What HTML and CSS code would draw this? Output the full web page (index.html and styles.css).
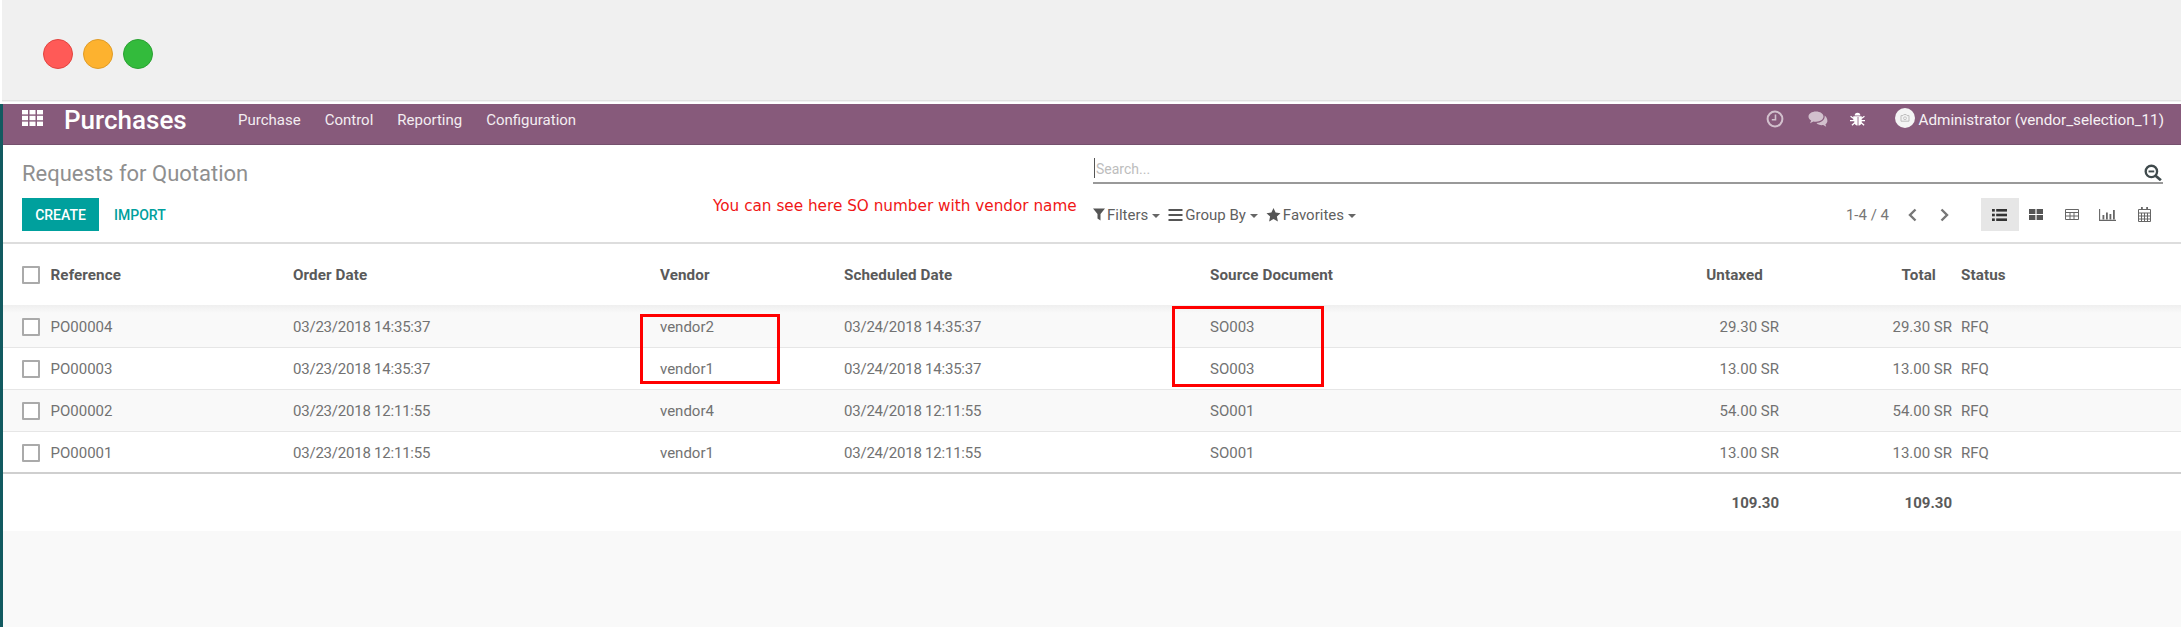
FILE: index.html
```html
<!DOCTYPE html>
<html lang="en">
<head>
<meta charset="utf-8">
<title>Requests for Quotation</title>
<link rel="stylesheet" href="styles.css">
</head>
<body>
<header class="chrome">
  <span class="light red"></span><span class="light amber"></span><span class="light green"></span>
</header>
<div class="app">
  <nav class="nav">
    <svg class="apps" viewBox="0 0 21 16" width="21" height="16"><g fill="#fff"><rect x="0" y="0" width="6" height="4.4"/><rect x="7.5" y="0" width="6" height="4.4"/><rect x="15" y="0" width="6" height="4.4"/><rect x="0" y="5.8" width="6" height="4.4"/><rect x="7.5" y="5.8" width="6" height="4.4"/><rect x="15" y="5.8" width="6" height="4.4"/><rect x="0" y="11.6" width="6" height="4.4"/><rect x="7.5" y="11.6" width="6" height="4.4"/><rect x="15" y="11.6" width="6" height="4.4"/></g></svg>
    <span class="brand">Purchases</span>
    <ul class="menu"><li>Purchase</li><li>Control</li><li>Reporting</li><li>Configuration</li></ul>
    <div class="systray">
      <svg class="tray-clock" viewBox="0 0 18 18" width="18" height="18"><circle cx="9" cy="9" r="7.4" fill="none" stroke="#d2c0cd" stroke-width="2"/><path d="M9.5 4.5V9.8H5.8" fill="none" stroke="#d2c0cd" stroke-width="1.6"/></svg>
      <svg class="tray-chat" viewBox="0 0 20 16" width="20" height="16"><path d="M8 0.5C3.8 0.5 0.5 2.8 0.5 5.6c0 1.6 1 3 2.7 4L2 12.2l3.4-1.7c.8.2 1.700.3 2.600.3 4.200 0 7.500-2.300 7.500-5.200S12.200.5 8 .5z" fill="#d2c0cd"/><path d="M16.600 4.400c.1.400.1.800.1 1.200 0 3.600-3.700 6.300-8.200 6.500 1 1.300 3 2.100 5.200 2.100.5 0 1 0 1.500-.1l3 1.700-.8-2.500c1.200-.8 2-2 2-3.300 0-2.400-1.200-4.500-2.800-5.600z" fill="#d2c0cd"/></svg>
      <svg class="tray-bug" viewBox="0 0 16 16" width="15" height="16"><g fill="#fff"><path d="M5 4.200a3 3 0 0 1 6 0z"/><path d="M3.500 5h9v1.500l2.500-2 .8 1-3.300 2.600V9H16v1.300h-3.500v1.200l3 2.700-.9 1-2.500-2.200c-.6 1.200-1.900 2-3.100 2V5.900h-.900V15c-1.200 0-2.500-.8-3.100-2l-2.500 2.200-.9-1 3-2.700v-1.200H0V9h3.500V8.100L.2 5.500l.8-1 2.500 2z"/></g></svg>
      <span class="avatar"><svg viewBox="0 0 12 10" width="10" height="8"><path d="M1 2h2.500l1-1.300h3L8.500 2H11v7H1z" fill="none" stroke="#bbb" stroke-width="1.200"/><circle cx="6" cy="5.300" r="1.800" fill="none" stroke="#bbb"/></svg></span>
      <span class="user">Administrator (vendor_selection_11)</span>
    </div>
  </nav>

  <section class="control">
    <div class="control-left">
      <h1 class="title">Requests for Quotation</h1>
      <div class="actions">
        <button class="btn-create">CREATE</button>
        <button class="btn-import">IMPORT</button>
      </div>
    </div>
    <div class="control-right">
      <div class="search">
        <span class="caret-bar"></span><span class="placeholder">Search...</span>
        <svg class="search-icon" viewBox="0 0 18 16" width="19" height="17"><circle cx="7" cy="7" r="5.400" fill="none" stroke="#3f4a4c" stroke-width="2.200"/><path d="M4.300 7h5.400" stroke="#3f4a4c" stroke-width="1.800"/><path d="M11 11l5 4.300" stroke="#3f4a4c" stroke-width="2.600"/></svg>
      </div>
      <div class="tools">
        <div class="filters">
          <span class="tool tool-filters"><svg viewBox="0 0 12 12" width="12" height="13"><path d="M0 0h12L7.500 5.500V12L4.500 10V5.500z" fill="#555"/></svg><span>Filters</span><i class="tri"></i></span>
          <span class="tool tool-group"><svg viewBox="0 0 14 12" width="15" height="12"><path d="M0 1h14M0 6h14M0 11h14" stroke="#555" stroke-width="1.800"/></svg><span>Group By</span><i class="tri"></i></span>
          <span class="tool tool-fav"><svg viewBox="0 0 14 14" width="15" height="14"><path d="M7 0l2.100 4.600 4.900.6-3.600 3.400 1 4.900L7 11.100 2.600 13.500l1-4.900L0 5.200l4.900-.6z" fill="#555"/></svg><span>Favorites</span><i class="tri"></i></span>
        </div>
        <span class="pager">1-4 / 4</span>
        <svg class="chev" viewBox="0 0 9 14" width="9" height="14"><path d="M7.500 1.500L2 7l5.500 5.500" fill="none" stroke="#777" stroke-width="2.400"/></svg>
        <svg class="chev chev-next" viewBox="0 0 9 14" width="9" height="14"><path d="M1.500 1.500L7 7l-5.500 5.500" fill="none" stroke="#777" stroke-width="2.400"/></svg>
        <div class="views">
          <span class="view active"><svg viewBox="0 0 15 12" width="15" height="12"><g fill="#333"><rect y="0" width="2.800" height="2.600"/><rect y="4.700" width="2.800" height="2.600"/><rect y="9.400" width="2.800" height="2.600"/><rect x="4.200" y="0" width="10.800" height="2.600"/><rect x="4.200" y="4.700" width="10.800" height="2.600"/><rect x="4.200" y="9.400" width="10.800" height="2.600"/></g></svg></span>
          <span class="view"><svg viewBox="0 0 14 11" width="14" height="11"><g fill="#555"><rect width="6.400" height="5"/><rect x="7.600" width="6.400" height="5"/><rect y="6" width="6.400" height="5"/><rect x="7.600" y="6" width="6.400" height="5"/></g></svg></span>
          <span class="view"><svg viewBox="0 0 14 11" width="14" height="11"><path d="M.5.500h13v10H.500zM.5 3.500h13M.5 7h13M5 3.500v7M9 3.500v7" fill="none" stroke="#666"/></svg></span>
          <span class="view"><svg viewBox="0 0 17 12" width="17" height="12"><path d="M.6 0v11.400H17" fill="none" stroke="#666" stroke-width="1.100"/><path d="M3.500 6h1.800v4.500H3.500zM7 3.500h1.800v7H7zM10.500 5h1.800v5.500h-1.800zM14 1h1.800v9.500H14z" fill="#666"/></svg></span>
          <span class="view view-last"><svg viewBox="0 0 13 15" width="13" height="15"><path d="M.5 2.500h12v12H.5zM.5 6h12M.5 9h12M.5 12h12M3.500 6v8.500M6.500 6v8.500M9.500 6v8.500" fill="none" stroke="#666"/><path d="M3 0h1.800v3H3zM8.200 0H10v3H8.200z" fill="#666"/></svg></span>
        </div>
      </div>
    </div>
    <p class="note">You can see here SO number with vendor name</p>
  </section>

  <main class="list">
    <table class="grid">
      <colgroup><col class="c-check"><col class="c-ref"><col class="c-date"><col class="c-vendor"><col class="c-sched"><col class="c-src"><col class="c-untaxed"><col class="c-total"><col></colgroup>
      <thead>
        <tr><th><span class="box box-head"></span></th><th>Reference</th><th>Order Date</th><th>Vendor</th><th>Scheduled Date</th><th>Source Document</th><th class="num head-num">Untaxed</th><th class="num head-num">Total</th><th class="status">Status</th></tr>
      </thead>
      <tbody>
        <tr><td><span class="box"></span></td><td>PO00004</td><td class="date">03/23/2018 14:35:37</td><td>vendor2</td><td class="date">03/24/2018 14:35:37</td><td>SO003</td><td class="num">29.30 SR</td><td class="num">29.30 SR</td><td class="status">RFQ</td></tr>
        <tr><td><span class="box"></span></td><td>PO00003</td><td class="date">03/23/2018 14:35:37</td><td>vendor1</td><td class="date">03/24/2018 14:35:37</td><td>SO003</td><td class="num">13.00 SR</td><td class="num">13.00 SR</td><td class="status">RFQ</td></tr>
        <tr><td><span class="box"></span></td><td>PO00002</td><td class="date">03/23/2018 12:11:55</td><td>vendor4</td><td class="date">03/24/2018 12:11:55</td><td>SO001</td><td class="num">54.00 SR</td><td class="num">54.00 SR</td><td class="status">RFQ</td></tr>
        <tr><td><span class="box"></span></td><td>PO00001</td><td class="date">03/23/2018 12:11:55</td><td>vendor1</td><td class="date">03/24/2018 12:11:55</td><td>SO001</td><td class="num">13.00 SR</td><td class="num">13.00 SR</td><td class="status">RFQ</td></tr>
      </tbody>
      <tfoot>
        <tr><td colspan="6"></td><td class="num">109.30</td><td class="num">109.30</td><td></td></tr>
      </tfoot>
    </table>
    <span class="mark mark-vendor"></span>
    <span class="mark mark-source"></span>
  </main>
</div>
</body>
</html>
```

FILE: styles.css
```css
* { box-sizing: border-box; }
html, body { margin: 0; padding: 0; }
body {
  width: 2181px;
  height: 627px;
  overflow: hidden;
  background: #fff;
  font-family: Roboto, "Liberation Sans", sans-serif;
  font-size: 15px;
  color: #666;
}
.chrome {
  height: 104px;
  margin-left: 2px;
  padding: 39px 0 0 41px;
  display: flex;
  gap: 10px;
  align-items: flex-start;
  background: linear-gradient(#f0f0f0 100px, #dcdcdc 100px, #e6e6e6 101px, #fff 102px);
}
.light { width: 30px; height: 30px; border-radius: 50%; border: 1px solid; }
.red { background: #ff5a57; border-color: #e2443f; }
.amber { background: #fdb22f; border-color: #e09c27; }
.green { background: #33bb3c; border-color: #2aa132; }

.app {
  height: 523px;
  border-left: 3px solid #125a60;
  background: #f9f9f9;
  display: flex;
  flex-direction: column;
}
.nav {
  height: 41px;
  flex: none;
  display: flex;
  align-items: center;
  padding: 0 0 9px 19px;
  background: #875a7b;
  border-bottom: 1px solid #75506d;
  color: #fff;
}
.apps { margin-top: -4px; flex: none; }
.brand { margin-left: 21px; width: 174px; font-size: 26px; font-weight: 500; line-height: 30px; }
.menu { list-style: none; margin: 0; padding: 0; display: flex; gap: 24px; font-size: 15px; color: #f3edf1; }
.systray { margin-left: auto; display: flex; align-items: center; padding-right: 17px; }
.tray-clock { margin-top: -2px; }
.tray-chat { margin: -2px 0 0 24px; }
.tray-bug { margin: -2px 0 0 22px; }
.avatar {
  width: 20px; height: 20px; margin: -4px 0 0 30px;
  border-radius: 50%; background: #f4f4f4;
  display: flex; align-items: center; justify-content: center;
}
.user { margin-left: 3px; font-size: 15.250px; color: #f6f1f4; }

.control {
  position: relative;
  height: 99px;
  flex: none;
  display: flex;
  justify-content: space-between;
  padding: 0 18px 0 19px;
  background: #fff;
  border-bottom: 2px solid #ddd;
}
.title { margin: 15px 0 0; font-size: 22px; font-weight: 400; line-height: 27px; color: #8f8f8f; }
.actions { display: flex; margin-top: 11px; }
.btn-create {
  width: 77px; height: 33px; border: 0; padding: 0;
  background: #00a09d; color: #fff;
  font: 500 14px Roboto, sans-serif;
}
.btn-import {
  margin-left: 15px; padding: 0; border: 0; background: none;
  color: #00a09d; font: 500 14px Roboto, sans-serif;
}
.control-right { width: 1070px; }
.search {
  position: relative;
  height: 39px;
  padding-top: 13px;
  display: flex;
  align-items: flex-start;
  border-bottom: 2px solid #999;
}
.caret-bar { width: 1px; height: 20px; background: #555; margin: 0 1px 0 1px; }
.placeholder { font-size: 14px; line-height: 22px; color: #bdbdbd; }
.search-icon { position: absolute; right: 0; top: 19px; }
.tools { display: flex; align-items: center; margin-top: 14px; height: 33px; }
.filters { display: flex; align-items: center; flex: 1; }
.tool { display: flex; align-items: center; font-size: 15px; color: #5f5f5f; }
.tool span { margin-left: 2px; }
.tool-group, .tool-fav { margin-left: 8px; }
.tri { width: 0; height: 0; margin-left: 4px; margin-top: 2px; border: 4px solid transparent; border-top-color: #666; border-bottom: 0; }
.pager { font-size: 15px; color: #777; margin-right: 19px; }
.chev { flex: none; }
.chev-next { margin-left: 23px; }
.views { display: flex; margin-left: 31.500px; }
.view { width: 35.500px; height: 33px; display: flex; align-items: center; justify-content: center; }
.view.active { width: 38px; background: #e6e6e6; }
.view.view-last { width: 38px; }
.note {
  position: absolute;
  left: 710px;
  top: 52px;
  margin: 0;
  font-family: "DejaVu Sans", sans-serif;
  font-size: 15.250px;
  color: #f01616;
}

.list { position: relative; background: #fff; flex: none; height: 287px; }
.grid { width: 2178px; border-collapse: collapse; table-layout: fixed; }
.c-check { width: 47.500px; }
.c-ref { width: 242.500px; }
.c-date { width: 367px; }
.c-vendor { width: 184px; }
.c-sched { width: 366px; }
.c-src { width: 395px; }
.c-untaxed { width: 174px; }
.c-total { width: 173px; }
.grid th, .grid td { padding: 0; text-align: left; font-size: 15px; }
.grid th { height: 61px; padding-top: 1px; font-size: 15.200px; font-weight: 700; letter-spacing: .1px; color: #5a5a5a; }
.grid th:first-child, .grid td:first-child { padding-left: 19px; }
.grid tbody td { height: 42px; padding-top: 2px; border-bottom: 1px solid #e6e6e6; color: #727272; }
.grid tbody tr:nth-child(odd) { background: #f9f9f9; }
.grid tbody tr:first-child td { background: linear-gradient(#efefef, #f9f9f9 8px); }
.grid tbody tr:last-child td { border-bottom: 2px solid #cfcfcf; }
.grid tfoot td { height: 58px; font-weight: 700; color: #5a5a5a; }
.grid .date { letter-spacing: -.22px; }
.grid .num { text-align: right; }
.grid .head-num { padding-right: 16px; }
.grid .status { padding-left: 9px; }
.box { display: block; width: 18px; height: 18px; border: 2px solid #aaa; background: #fff; border-radius: 1px; }
.mark { position: absolute; border: 3.500px solid #f00; }
.mark-vendor { left: 637px; top: 70px; width: 140px; height: 70px; }
.mark-source { left: 1169px; top: 62px; width: 152px; height: 81px; }
```
